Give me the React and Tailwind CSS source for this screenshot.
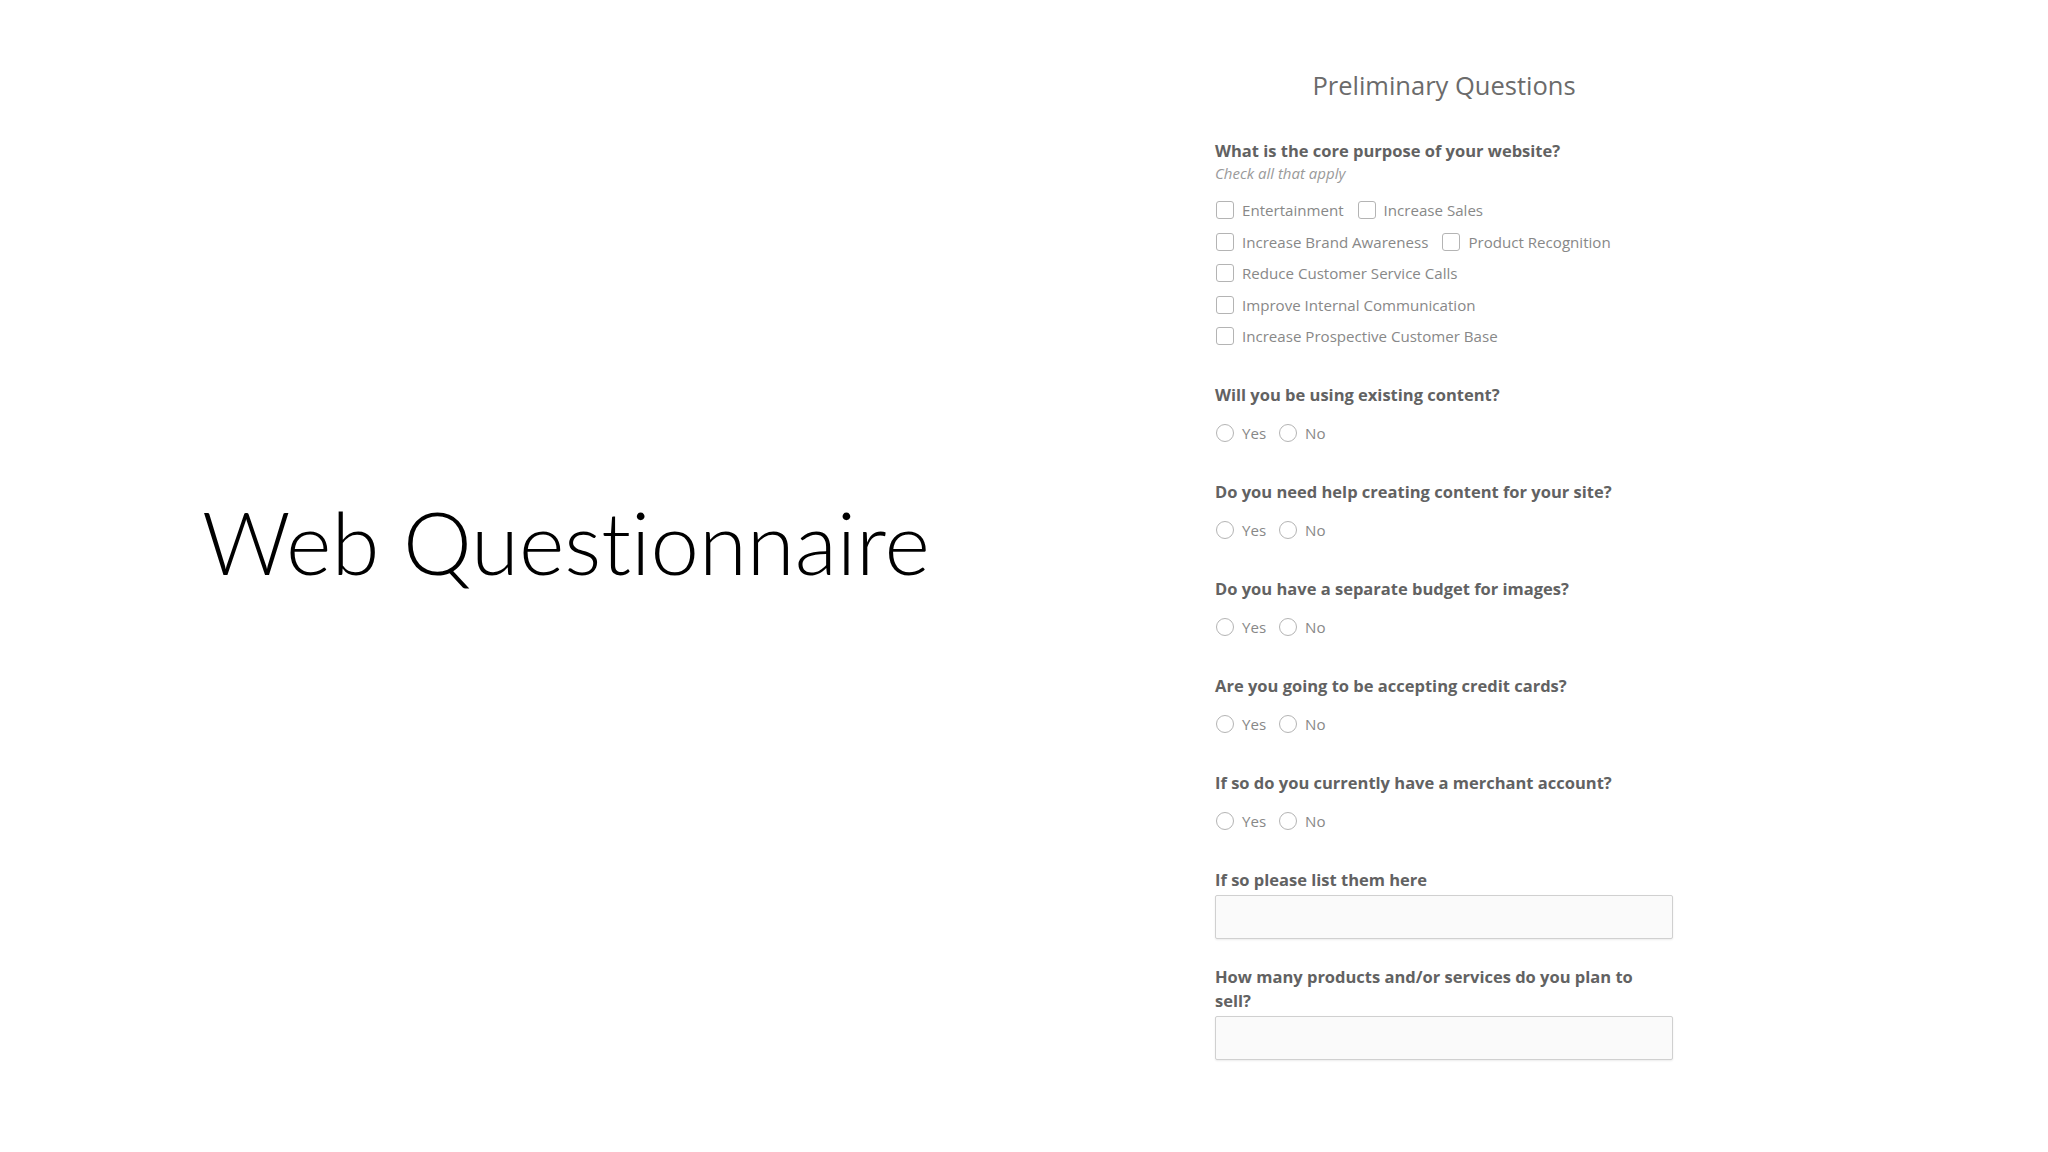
import React from 'react'

const purposes = [
  ['Entertainment', 'Increase Sales'],
  ['Increase Brand Awareness', 'Product Recognition'],
  ['Reduce Customer Service Calls'],
  ['Improve Internal Communication'],
  ['Increase Prospective Customer Base'],
]

const yesNo = [
  'Will you be using existing content?',
  'Do you need help creating content for your site?',
  'Do you have a separate budget for images?',
  'Are you going to be accepting credit cards?',
  'If so do you currently have a merchant account?',
]

function Checkbox({ label }) {
  return (
    <label className="flex h-[18px] items-center gap-2">
      <span className="h-[18px] w-[18px] rounded-[3px] border border-[#b4b4b4] bg-white" />
      <span className="text-[15.1px] leading-[18px] text-[#888888]">{label}</span>
    </label>
  )
}

function Radio({ label }) {
  return (
    <label className="flex h-[18px] items-center gap-2">
      <span className="h-[18px] w-[18px] rounded-full border border-[#b4b4b4] bg-white" />
      <span className="text-[15.1px] leading-[18px] text-[#888888]">{label}</span>
    </label>
  )
}

function Question({ children }) {
  return (
    <div className="text-[16.5px] font-bold leading-[24px] text-[#626262]">{children}</div>
  )
}

export default function App() {
  return (
    <div className="flex h-[1152px] w-[2048px] bg-white font-['Open_Sans',sans-serif]">
      <div className="w-[1215px] shrink-0 pl-[202px] pt-[498px]">
        <h1 className="font-['Lato',sans-serif] text-[87px] font-light leading-none text-black [font-variant-ligatures:none]">
          Web Questionnaire
        </h1>
      </div>

      <div className="w-[458px] shrink-0 pt-[66.5px]">
        <h2 className="text-center text-[25.5px] leading-[36px] text-[#6b6b6b]">Preliminary Questions</h2>

        <div className="mt-[36.5px]">
          <Question>What is the core purpose of your website?</Question>
          <div className="text-[15px] italic leading-[20px] text-[#9a9a9a]">Check all that apply</div>
          <div className="mt-[18px] flex flex-col gap-[13.5px]">
            {purposes.map((row) => (
              <div key={row[0]} className="flex gap-[14px] pl-px">
                {row.map((p) => (
                  <Checkbox key={p} label={p} />
                ))}
              </div>
            ))}
          </div>
        </div>

        {yesNo.map((q) => (
          <div key={q} className="mt-[37.5px]">
            <Question>{q}</Question>
            <div className="mt-[17.5px] flex gap-[13px] pl-px">
              <Radio label="Yes" />
              <Radio label="No" />
            </div>
          </div>
        ))}

        <div className="mt-[37.5px]">
          <Question>If so please list them here</Question>
          <input
            type="text"
            className="mt-[3px] block h-[44px] w-full rounded-[2px] border border-[#d0d0d0] bg-[#fafafa] shadow-[0_1px_2px_rgba(0,0,0,0.08)] outline-none"
          />
        </div>

        <div className="mt-[26px]">
          <Question>
            How many products and/or services do you plan to
            <br />
            sell?
          </Question>
          <input
            type="text"
            className="mt-[3px] block h-[44px] w-full rounded-[2px] border border-[#d0d0d0] bg-[#fafafa] shadow-[0_1px_2px_rgba(0,0,0,0.08)] outline-none"
          />
        </div>
      </div>
    </div>
  )
}
